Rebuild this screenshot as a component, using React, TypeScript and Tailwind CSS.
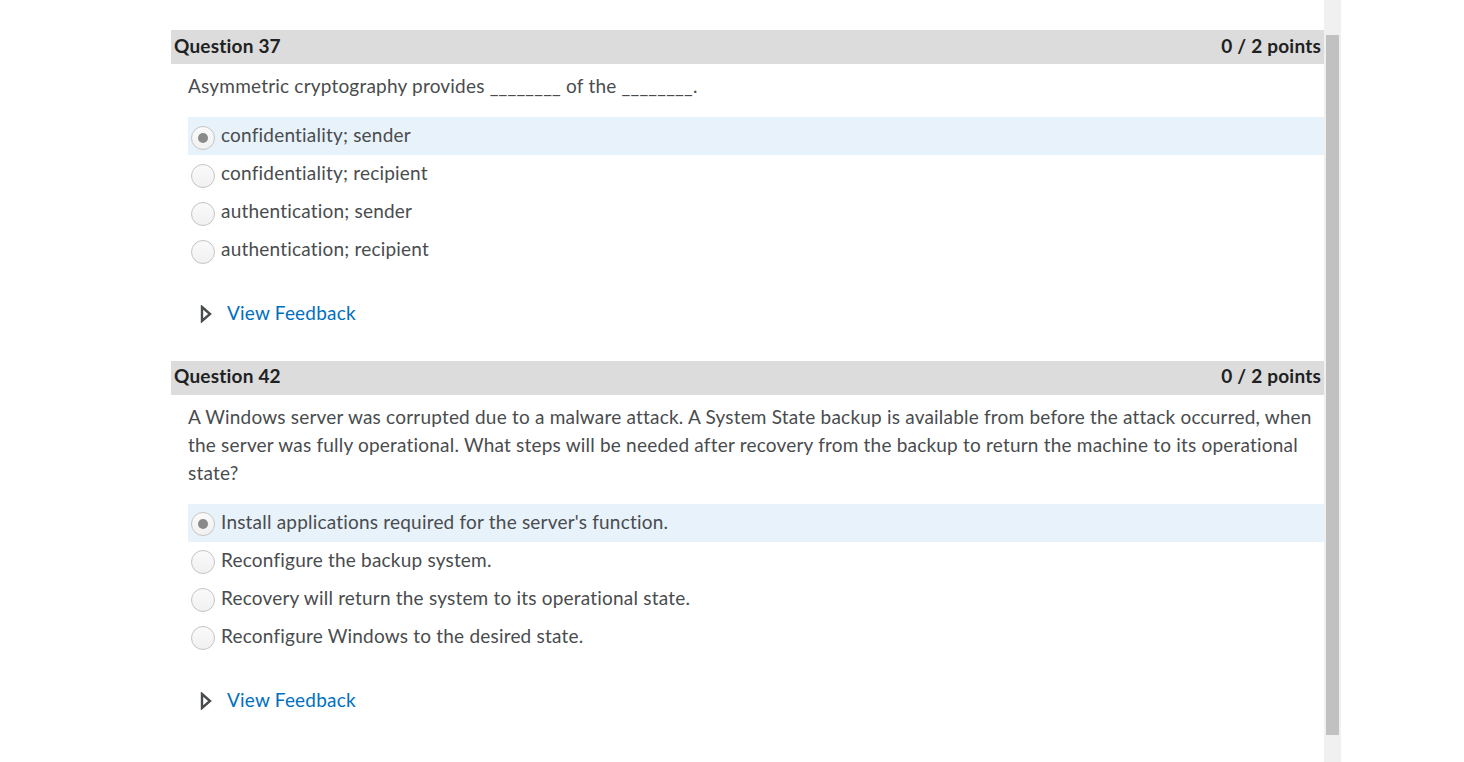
import React from 'react';

interface QuestionProps {
  number: number;
  text: string;
  options: string[];
  selected: number;
}

const Radio: React.FC<{ checked: boolean }> = ({ checked }) => (
  <span className="flex h-[24px] w-[24px] shrink-0 items-center justify-center rounded-full border border-[#c4c4c4] bg-gradient-to-b from-[#fafafa] to-[#f1f1f1]">
    {checked && <span className="h-[10px] w-[10px] rounded-full bg-[#8a8a8a]" />}
  </span>
);

const Question: React.FC<QuestionProps> = ({ number, text, options, selected }) => (
  <div className="flex flex-col">
    <div className="flex h-[34px] items-center justify-between bg-[#dcdcdc] px-[3px] pb-[2px] text-[19px] font-bold text-[#202122]">
      <span>Question {number}</span>
      <span>0 / 2 points</span>
    </div>
    <p className="mt-[8px] pl-[17px] pr-[10px] text-[19px] leading-[28px] text-[#494c4e]">{text}</p>
    <div className="mt-[17px] flex flex-col">
      {options.map((opt, i) => (
        <div
          key={opt}
          className={`ml-[17px] flex h-[38px] items-center gap-[6px] pl-[3px] pt-[3px] text-[19px] text-[#494c4e] ${i === selected ? 'bg-[#e8f2fb]' : ''}`}
        >
          <Radio checked={i === selected} />
          <span className="-mt-[4px]">{opt}</span>
        </div>
      ))}
    </div>
    <div className="mt-[30px] flex items-center pl-[29px]">
      <svg width="12" height="18" viewBox="0 0 12 18" className="mt-[2px]">
        <path d="M2 2 L10 9 L2 16 Z" fill="none" stroke="#494c4e" strokeWidth="2.4" strokeLinejoin="miter" />
      </svg>
      <span className="ml-[15px] text-[19px] text-[#006fbf]">View Feedback</span>
    </div>
  </div>
);

export default function App() {
  return (
    <div className="flex h-[762px] w-full bg-white font-['Lato','Liberation_Sans',sans-serif] tracking-[0.2px] [font-variant-ligatures:none]">
      <div className="w-[171px] shrink-0" />
      <div className="flex w-[1153px] shrink-0 flex-col pt-[30px]">
        <Question
          number={37}
          text="Asymmetric cryptography provides ________ of the ________."
          options={[
            'confidentiality; sender',
            'confidentiality; recipient',
            'authentication; sender',
            'authentication; recipient',
          ]}
          selected={0}
        />
        <div className="h-[33px]" />
        <Question
          number={42}
          text="A Windows server was corrupted due to a malware attack. A System State backup is available from before the attack occurred, when the server was fully operational. What steps will be needed after recovery from the backup to return the machine to its operational state?"
          options={[
            "Install applications required for the server's function.",
            'Reconfigure the backup system.',
            'Recovery will return the system to its operational state.',
            'Reconfigure Windows to the desired state.',
          ]}
          selected={0}
        />
      </div>
      <div className="flex h-full w-[17px] shrink-0 justify-center bg-[#f0f0f0] pt-[35px] pb-[27px]">
        <div className="h-full w-[13px] bg-[#c1c1c1]" />
      </div>
    </div>
  );
}
